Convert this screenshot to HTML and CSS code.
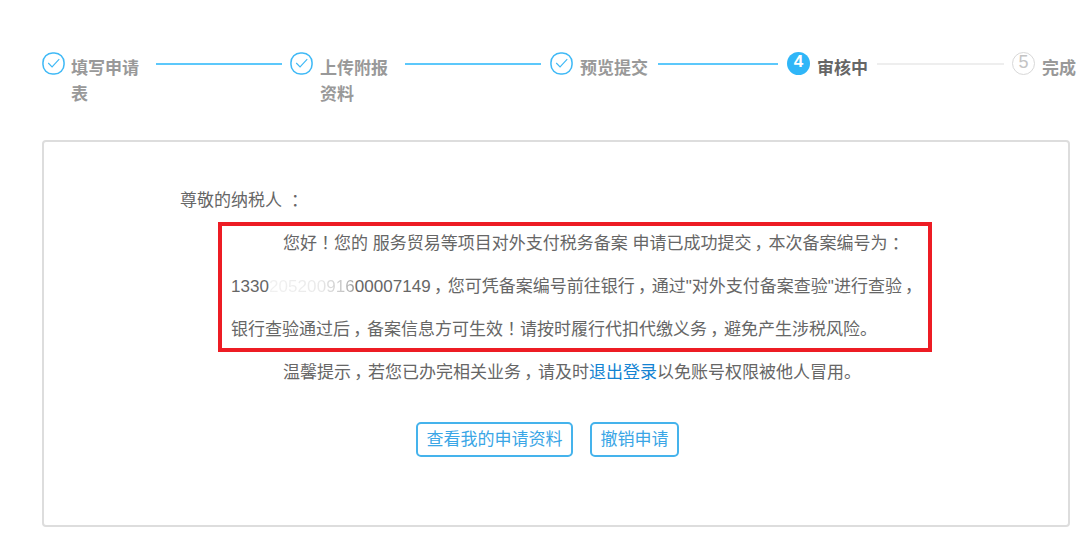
FILE: index.html
```html
<!DOCTYPE html>
<html lang="zh-CN">
<head>
<meta charset="utf-8">
<title>审核中</title>
<link rel="stylesheet" href="styles.css">
</head>
<body>
<main class="page">
  <ol class="steps">
    <li class="step done first">
      <svg class="icon" viewBox="0 0 24 24"><rect x="1" y="1" width="22" height="22" rx="10" fill="none" stroke="#3fb9f6" stroke-width="1.6"/><path d="M6.5 11.5 L10.5 15.5 L18 7.5" fill="none" stroke="#3fb9f6" stroke-width="1.2"/></svg>
      <span class="title wrap">填写申请表</span>
    </li>
    <li class="line on l1"></li>
    <li class="step done">
      <svg class="icon" viewBox="0 0 24 24"><rect x="1" y="1" width="22" height="22" rx="10" fill="none" stroke="#3fb9f6" stroke-width="1.6"/><path d="M6.5 11.5 L10.5 15.5 L18 7.5" fill="none" stroke="#3fb9f6" stroke-width="1.2"/></svg>
      <span class="title wrap">上传附报资料</span>
    </li>
    <li class="line on l2"></li>
    <li class="step done">
      <svg class="icon" viewBox="0 0 24 24"><rect x="1" y="1" width="22" height="22" rx="10" fill="none" stroke="#3fb9f6" stroke-width="1.6"/><path d="M6.5 11.5 L10.5 15.5 L18 7.5" fill="none" stroke="#3fb9f6" stroke-width="1.2"/></svg>
      <span class="title">预览提交</span>
    </li>
    <li class="line on l3"></li>
    <li class="step current">
      <span class="num">4</span>
      <span class="title">审核中</span>
    </li>
    <li class="line l4"></li>
    <li class="step todo">
      <span class="num">5</span>
      <span class="title">完成</span>
    </li>
  </ol>

  <section class="card">
    <p class="greet">尊敬的纳税人 <span class="pu">：</span></p>
    <div class="notice">
      <p class="indent">您好<span class="pu">！</span>您的 服务贸易等项目对外支付税务备案 申请已成功提交<span class="pu">，</span>本次备案编号为<span class="pu">：</span></p>
      <p><span class="digits">1330<span class="blur">205200916</span>00007149</span><span class="pu">，</span>您可凭备案编号前往银行<span class="pu">，</span>通过"对外支付备案查验"进行查验<span class="pu">，</span></p>
      <p>银行查验通过后<span class="pu">，</span>备案信息方可生效<span class="pu">！</span>请按时履行代扣代缴义务<span class="pu">，</span>避免产生涉税风险。</p>
    </div>
    <p class="tip">温馨提示<span class="pu">，</span>若您已办完相关业务<span class="pu">，</span>请及时<a href="#" class="link">退出登录</a>以免账号权限被他人冒用。</p>
    <div class="actions">
      <a href="#" class="btn">查看我的申请资料</a>
      <a href="#" class="btn">撤销申请</a>
    </div>
  </section>
</main>
</body>
</html>
```

FILE: styles.css
```css
* { box-sizing: border-box; }
html, body { margin: 0; padding: 0; background: #fff; }
body {
  font-family: "Liberation Sans", "Noto Sans CJK SC", sans-serif;
  color: #666;
  height: 545px;
  overflow: hidden;
}
.page { padding: 52px 10px 0 42px; }
p { margin: 0; }

.steps {
  list-style: none;
  margin: 0;
  padding: 0;
  display: flex;
  align-items: flex-start;
  height: 88px;
  width: 1040px;
}
.step { display: flex; align-items: flex-start; flex: none; }
.icon { width: 23px; height: 23px; flex: none; display: block; }
.title {
  margin-left: 7px;
  margin-top: 4px;
  font-size: 17px;
  line-height: 26px;
  font-weight: 700;
  color: #999;
  white-space: nowrap;
}
.first .title { margin-left: 6px; }
.current .title { color: #666; }
.title.wrap { white-space: normal; width: 68px; }
.num {
  width: 23px;
  height: 23px;
  border-radius: 50%;
  flex: none;
  text-align: center;
  font-size: 17px;
  line-height: 20px;
}
.current .num { background: #2fb6f8; color: #fff; font-weight: 700; }
.todo .num { border: 1.5px solid #d8d8d8; color: #c4c4c4; font-size: 18px; line-height: 19px; }

.line { height: 2px; margin-top: 11px; background: #eee; flex: none; }
.line.on { background: #5cc8fb; }
.l1 { width: 126px; margin-left: 17px; margin-right: 8px; }
.l2 { width: 136px; margin-left: 17px; margin-right: 9px; }
.l3 { width: 120px; margin-left: 10px; margin-right: 9px; }
.l4 { width: 127px; margin-left: 9px; margin-right: 8px; }

.card {
  width: 1028px;
  height: 387px;
  border: 2px solid #ddd;
  border-radius: 4px;
  padding: 37px 0 0 136px;
  font-size: 17px;
  line-height: 43px;
}
.greet { height: 43px; }
.pu {
  display: inline-block;
  width: 1em;
  text-align: center;
  text-indent: 0;
  font-feature-settings: "palt";
}
.notice {
  width: 714px;
  height: 130px;
  margin-left: 38px;
  padding: 0 0 0 13px;
  box-shadow: inset 0 0 0 4px #ed1c24;
  white-space: nowrap;
}
.indent { text-indent: 52px; }
.digits { letter-spacing: 0.06px; }
.blur {
  background: linear-gradient(90deg, #f1f1f1 0%, #e9e9e9 60%, #c8c8c8 85%, #999 100%);
  -webkit-background-clip: text;
  background-clip: text;
  color: transparent;
}
.tip { margin: -1px 0 0 103px; height: 43px; }
.link { color: #1383d2; text-decoration: none; }
.actions {
  display: flex;
  gap: 17px;
  margin: 28px 0 0 236px;
}
.btn {
  display: block;
  height: 35px;
  padding: 0 8.5px;
  border: 2px solid #45b3ec;
  border-radius: 5px;
  color: #3aa6e6;
  font-size: 17px;
  line-height: 31px;
  text-decoration: none;
  white-space: nowrap;
}
```
